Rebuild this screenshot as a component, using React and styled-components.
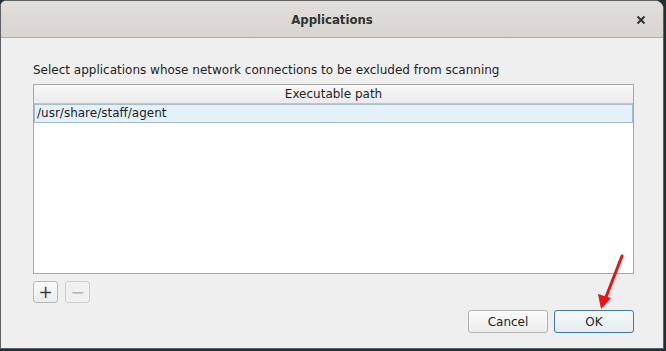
import React from 'react';
import styled, {createGlobalStyle} from 'styled-components';

const GlobalStyle = createGlobalStyle`
    html, body {
        margin: 0;
        padding: 0;
        background: #1c3035;
        width: 666px;
        height: 351px;
        overflow: hidden;
    }
    #root {
        width: 666px;
        height: 351px;
        position: relative;
    }
`;

const App = () => {
    return (
        <>
            <GlobalStyle/>
            <Window>
                <TitleBar>
                    <Title>Applications</Title>
                    <CloseButton aria-label="close">
                        <svg width="10" height="10" viewBox="0 0 10 10">
                            <path d="M1.5 1.5 L8.5 8.5 M8.5 1.5 L1.5 8.5" stroke="#2e3436" strokeWidth="2"/>
                        </svg>
                    </CloseButton>
                </TitleBar>
                <Body>
                    <Label>Select applications whose network connections to be excluded from scanning</Label>
                    <Table>
                        <HeaderCell>Executable path</HeaderCell>
                        <Row selected>/usr/share/staff/agent</Row>
                    </Table>
                    <Tools>
                        <ToolButton>+</ToolButton>
                        <ToolButton disabled>−</ToolButton>
                    </Tools>
                    <Footer>
                        <DialogButton>Cancel</DialogButton>
                        <DialogButton primary>OK</DialogButton>
                    </Footer>
                </Body>
            </Window>
            <Arrow width="666" height="351" viewBox="0 0 666 351">
                <line x1="622" y1="256" x2="606" y2="297" stroke="#ee1111" strokeWidth="3" strokeLinecap="round"/>
                <polygon points="601,309 598,294 611,298" fill="#ee1111"/>
            </Arrow>
        </>
    );
};

// ---------- STILI ----------

const Window = styled.div`
    width: 662px;
    height: 347px;
    display: flex;
    flex-direction: column;
    background: #efefef;
    border: 1px solid #5d6163;
    border-radius: 6px 9px 0 0;
    overflow: hidden;
    font-family: "DejaVu Sans", "Noto Sans", sans-serif;
    color: #1e1e1e;
`;

const TitleBar = styled.div`
    height: 36px;
    flex-shrink: 0;
    display: flex;
    align-items: center;
    justify-content: center;
    position: relative;
    background: linear-gradient(#e2dfdb, #d8d4d0);
    border-bottom: 1px solid #b3aea9;
`;

const Title = styled.div`
    font-family: "Liberation Sans Narrow", "DejaVu Sans Condensed", sans-serif;
    font-weight: bold;
    font-size: 13px;
    color: #2e3436;
    margin-top: 1px;
`;

const CloseButton = styled.div`
    position: absolute;
    right: 17px;
    top: 14px;
    width: 10px;
    height: 10px;
    display: flex;
`;

const Body = styled.div`
    flex: 1;
    display: flex;
    flex-direction: column;
    padding: 24px 29px 0 32px;
`;

const Label = styled.div`
    font-size: 12px;
    line-height: 16px;
    height: 16px;
`;

const Table = styled.div`
    margin-top: 6px;
    height: 188px;
    background: #fff;
    border: 1px solid #a7a7a7;
    display: flex;
    flex-direction: column;
`;

const HeaderCell = styled.div`
    height: 18px;
    line-height: 18px;
    text-align: center;
    font-size: 12px;
    background: linear-gradient(#f8f8f8, #ebebeb);
    border-bottom: 1px solid #c2c2c2;
`;

const Row = styled.div`
    height: 17px;
    line-height: 17px;
    padding-left: 2px;
    font-size: 12px;
    background: ${ p => p.selected ? '#e4f1f9' : '#fff' };
    border: 1px solid ${ p => p.selected ? '#a9bccb' : 'transparent' };
`;

const Tools = styled.div`
    margin-top: 7px;
    display: flex;
    gap: 7px;
`;

const ToolButton = styled.div`
    width: 23px;
    height: 20px;
    display: flex;
    align-items: center;
    justify-content: center;
    font-size: 17px;
    color: ${ p => p.disabled ? '#b4b4b4' : '#3c3c3c' };
    border: 1px solid ${ p => p.disabled ? '#cdcdcd' : '#b8b8b8' };
    border-radius: 3px;
    background: ${ p => p.disabled ? '#f0f0f0' : 'linear-gradient(#fbfbfb, #ececec)' };
`;

const Footer = styled.div`
    margin-top: 7px;
    display: flex;
    justify-content: flex-end;
    gap: 6px;
`;

const DialogButton = styled.div`
    width: 78px;
    height: 21px;
    display: flex;
    align-items: center;
    justify-content: center;
    font-size: 12px;
    border: 1px solid ${ p => p.primary ? '#3d7aa6' : '#b3b3b3' };
    border-radius: 3px;
    background: ${ p => p.primary ? 'linear-gradient(#f6f9fb, #e6ecf1)' : 'linear-gradient(#fbfbfb, #ececec)' };
`;

const Arrow = styled.svg`
    position: absolute;
    left: 0;
    top: 0;
    pointer-events: none;
`;

export default App;
